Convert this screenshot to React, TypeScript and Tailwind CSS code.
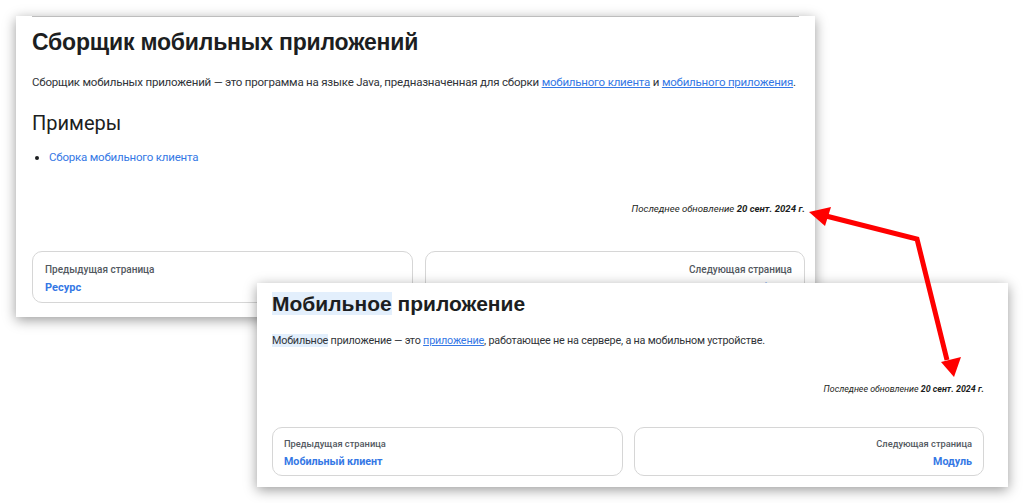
import React from 'react';

const body = "font-['Roboto','Open_Sans',sans-serif]";
const head = "font-['Liberation_Sans',Arial,sans-serif]";

const NavCard: React.FC<{ label: string; title: string; next?: boolean; small?: boolean }> = ({ label, title, next, small }) => (
  <div
    className={`flex-1 flex flex-col border border-[#d6d6d6] rounded-[10px] ${
      small ? 'h-[49px] px-[11px] pt-[9px]' : 'h-[52px] px-[12px] pt-[10px]'
    } ${next ? 'items-end' : 'items-start'} ${body}`}
  >
    <div className={`${small ? 'text-[9.3px] leading-[14px]' : 'text-[10px] leading-[15px]'} font-medium text-[#525860]`}>{label}</div>
    <div className={`${small ? 'text-[10.7px] leading-[17px] mt-[2px]' : 'text-[11px] leading-[18px] mt-[2px]'} font-bold text-[#3578e5]`}>{title}</div>
  </div>
);

const Updated: React.FC<{ small?: boolean }> = ({ small }) => (
  <div className={`flex justify-end italic text-[#1c1e21] ${body} ${small ? 'text-[8.9px] leading-[14px]' : 'text-[9.6px] leading-[16px]'}`}>
    <span>
      Последнее обновление <b>20 сент. 2024 г.</b>
    </span>
  </div>
);

export default function App() {
  return (
    <div className="relative w-[1024px] h-[503px] bg-white overflow-hidden">
      {/* first window */}
      <div className="absolute left-[16px] top-[16px] w-[799px] h-[301px] bg-white shadow-[0_3px_12px_rgba(0,0,0,0.4)] flex flex-col">
        <div className="mx-[16px] h-px bg-[#bdbdbd]" />
        <div className="px-[16px] pr-[10px] flex flex-col">
          <h1 className={`${head} text-[23px] tracking-[-0.2px] leading-[28px] font-bold text-[#1c1e21] mt-[11px]`}>Сборщик мобильных приложений</h1>
          <p className={`${body} whitespace-nowrap text-[11.5px] tracking-[-0.2px] leading-[20px] text-[#303338] mt-[16px]`}>
            Сборщик мобильных приложений — это программа на языке Java, предназначенная для сборки{' '}
            <span className="text-[#3578e5] underline">мобильного клиента</span> и{' '}
            <span className="text-[#3578e5] underline">мобильного приложения</span>.
          </p>
          <h2 className={`${body} text-[20px] leading-[24px] text-[#1c1e21] mt-[19px]`}>Примеры</h2>
          <ul className={`${body} text-[11.5px] tracking-[-0.2px] leading-[20px] mt-[12px] list-disc pl-[17px]`}>
            <li className="text-[#1c1e21]">
              <span className="text-[#3578e5]">Сборка мобильного клиента</span>
            </li>
          </ul>
          <div className="mt-[34px]">
            <Updated />
          </div>
          <div className="flex gap-[12px] mt-[34px]">
            <NavCard label="Предыдущая страница" title="Ресурс" />
            <NavCard label="Следующая страница" title="Сборка" next />
          </div>
        </div>
      </div>

      {/* second window */}
      <div className="absolute left-[257px] top-[283px] w-[751px] h-[204px] bg-white shadow-[0_3px_12px_rgba(0,0,0,0.4)] flex flex-col px-[15px] pr-[24px]">
        <h1 className={`${head} text-[21px] leading-[24px] font-bold text-[#1c1e21] mt-[9px]`}>
          <span className="bg-[#e3effc]">Мобильное</span> приложение
        </h1>
        <p className={`${body} text-[10.8px] tracking-[-0.2px] leading-[18px] text-[#303338] mt-[16px]`}>
          <span className="bg-[#e3effc]">Мобильное</span> приложение — это{' '}
          <span className="text-[#3578e5] underline">приложение</span>, работающее не на сервере, а на мобильном устройстве.
        </p>
        <div className="mt-[32px]">
          <Updated small />
        </div>
        <div className="flex gap-[11px] mt-[31px]">
          <NavCard label="Предыдущая страница" title="Мобильный клиент" small />
          <NavCard label="Следующая страница" title="Модуль" next small />
        </div>
      </div>

      {/* arrow */}
      <svg className="absolute left-0 top-0" width="1024" height="503" viewBox="0 0 1024 503">
        <polyline points="826,216 917,239 947,360" fill="none" stroke="#ff0000" strokeWidth="5" strokeLinejoin="miter" />
        <polygon points="809,212 831,207 825,226" fill="#ff0000" />
        <polygon points="941,362 961,357 954,377" fill="#ff0000" />
      </svg>
    </div>
  );
}
